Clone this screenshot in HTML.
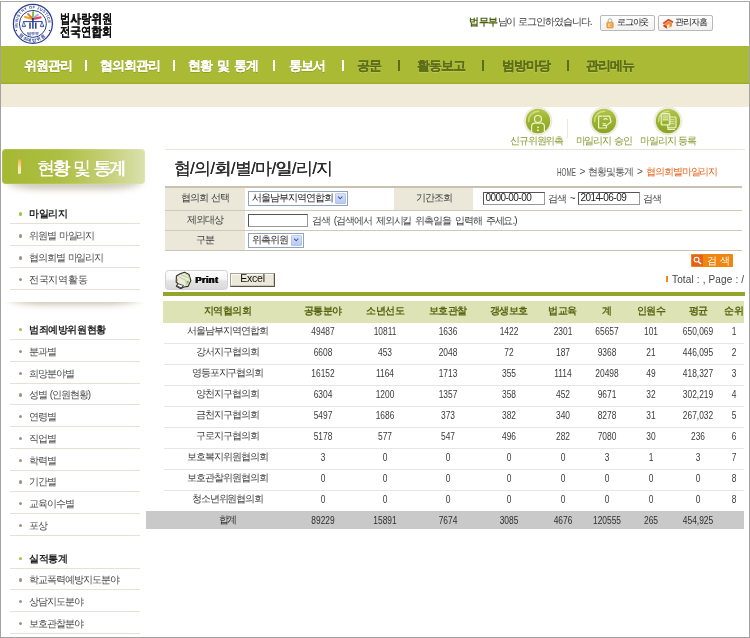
<!DOCTYPE html>
<html lang="ko">
<head>
<meta charset="utf-8">
<title>협의회별마일리지</title>
<style>
html,body{margin:0;padding:0;}
body{width:750px;height:638px;position:relative;overflow:hidden;background:#fff;
 font-family:"Liberation Sans",sans-serif;font-size:9px;color:#444;line-height:1;}
.a{position:absolute;}
.t{position:absolute;white-space:nowrap;}
.c{position:absolute;white-space:nowrap;text-align:center;}
/* frame */
#fl{left:0;top:1px;width:1px;height:637px;background:#a2a2a2;}
#fr{left:749px;top:1px;width:1px;height:637px;background:#a2a2a2;}
#ft{left:0;top:1px;width:750px;height:1px;background:#a8a8a8;}
#fb{left:0;top:637px;width:750px;height:1px;background:#a2a2a2;}
/* header */
.logotxt{left:59.5px;font-size:13px;font-weight:bold;color:#111;letter-spacing:0;transform:scaleX(.8);transform-origin:0 50%;line-height:13px;text-shadow:.6px 0 0 #111;}
.btn{position:absolute;top:15px;height:14px;border:1px solid #b9b9b9;border-radius:2px;background:linear-gradient(#fff,#f1f1f1);box-sizing:content-box;}
.btn span{position:absolute;top:2.3px;font-size:9.2px;color:#1a1a1a;white-space:nowrap;letter-spacing:-1.2px;}
/* nav */
#nav{left:1px;top:46px;width:748px;height:37.5px;background:linear-gradient(#abba35,#abba35 35.5px,#9fae2a 37.5px);}
#band{left:1px;top:83.5px;width:748px;height:23.2px;background:#f0ead9;}
.nv{position:absolute;top:59px;font-size:12.5px;font-weight:bold;white-space:nowrap;letter-spacing:-1.1px;word-spacing:2.6px;line-height:14px;}
.nw{color:#fff;text-shadow:.4px 0 0 #fff,0 1px 0 #8c9c22;}
.nd{color:#5d6c19;text-shadow:.4px 0 0 #5d6c19,0 1px 0 #bccb55;}
.sep{position:absolute;top:60px;width:2px;height:11px;}
.sw{background:#fff;}
.sd{background:#5d6c19;}
/* side */
#stitle{left:2px;top:149px;width:143px;height:35px;border-radius:4px;box-shadow:inset 0 0 0 1px rgba(255,255,255,.12);background:linear-gradient(90deg,#a5b833 0%,#adbf42 40%,#c3cf74 72%,#dbe1ae 100%);}
#sshadow{left:6px;top:180px;width:136px;height:9px;background:rgba(165,155,125,.6);border-radius:0 0 40px 40px/0 0 8px 8px;filter:blur(3.5px);}
#sshadow2w{left:0;top:302px;width:150px;height:14px;overflow:hidden;}
#sshadow2{left:7px;top:-7px;width:135px;height:9px;background:rgba(170,158,125,.7);border-radius:0 0 40px 40px/0 0 8px 8px;filter:blur(3.5px);}
.sl{position:absolute;left:10px;width:130px;height:1px;background:#e6e1d5;}
.si{position:absolute;left:29px;font-size:10px;color:#4a4a4a;white-space:nowrap;letter-spacing:-1.05px;word-spacing:1px;line-height:12px;}
.sh{font-weight:bold;color:#222;letter-spacing:-.4px;}
.bu{position:absolute;left:18.8px;width:3.6px;height:3.6px;margin-top:-.3px;border-radius:2px;background:#a2947c;}
.bg{background:#9dc43a;}
/* icons */
.ic{position:absolute;width:30px;height:30px;}
.il{position:absolute;top:135px;font-size:10px;color:#86962a;white-space:nowrap;line-height:12px;letter-spacing:-1.15px;word-spacing:1.2px;}
/* content */
#cline{left:165px;top:149px;width:580px;height:1px;background:#ebe4d6;}
#ctitle{left:173.5px;top:157px;font-size:16.5px;color:#2a2a2a;letter-spacing:-.6px;text-shadow:.3px 0 0 #2a2a2a;line-height:22px;}
.bc{top:166.4px;font-size:10px;letter-spacing:-1.1px;color:#555;line-height:12px;}
/* form */
.fl{position:absolute;left:165px;width:577px;height:1px;background:#cfc9bb;}
.lab{position:absolute;background:#ece8d9;text-align:center;font-size:10px;letter-spacing:-1px;word-spacing:1px;color:#3c3c3c;white-space:nowrap;}
.inp{position:absolute;box-sizing:border-box;background:#fff;border:1px solid #555;border-right-color:#999;border-bottom-color:#999;font-size:9px;color:#222;white-space:nowrap;overflow:hidden;}
.sel{position:absolute;box-sizing:border-box;background:#fff;border:1px solid #8ea3bd;font-size:10px;letter-spacing:-1.05px;color:#1a1a1a;white-space:nowrap;overflow:hidden;}
.sel b{position:absolute;right:.6px;top:.6px;bottom:.6px;width:11px;background:linear-gradient(#dbe4fb,#b4c6f2);border-radius:2px;box-shadow:inset 0 0 0 .6px #a9bbe6;}
.sel b:after{content:"";position:absolute;left:2.6px;top:2.2px;width:3.4px;height:3.4px;border-right:1.7px solid #2f4a7c;border-bottom:1.7px solid #2f4a7c;transform:rotate(45deg) scale(.85);transform-origin:center;}
.ft{position:absolute;font-size:10px;letter-spacing:-1.05px;word-spacing:2.1px;color:#3c3c3c;white-space:nowrap;line-height:12px;}
/* table */
#gline{left:163px;top:291.7px;width:582px;height:4.5px;background:#93a52b;}
#thead{left:163px;top:301px;width:581px;height:22px;background:#dde3b5;}
.th{position:absolute;top:305.3px;font-size:10px;font-weight:bold;color:#566510;white-space:nowrap;transform:translateX(-50%);line-height:12px;letter-spacing:-.5px;}
.rl{position:absolute;left:164px;width:580px;height:1px;background:#e6e6e6;}
.td{position:absolute;font-size:10px;letter-spacing:-1.05px;color:#3c3c3c;white-space:nowrap;transform:translateX(-50%);line-height:12px;}
.n{font-size:10.5px;letter-spacing:0;color:#3a3a3a;transform:translateX(-50%) scaleX(.8);}
#total{left:146px;top:511px;width:598px;height:18px;background:#c9c9c9;}
</style>
</head>
<body>
<div id="wrap" style="position:absolute;left:0;top:0;width:750px;height:638px;will-change:transform;">
<!-- frame -->
<div class="a" id="ft"></div><div class="a" id="fl"></div><div class="a" id="fr"></div><div class="a" id="fb"></div>

<!-- logo -->
<svg class="a" style="left:12px;top:3px" width="42" height="42" viewBox="0 0 42 42">
 <circle cx="20.9" cy="20.8" r="19.5" fill="#fff" stroke="#2b3d93" stroke-width="1.25"/>
 <circle cx="20.9" cy="20.9" r="13.5" fill="none" stroke="#2b3d93" stroke-width="1"/>
 <path id="lgt" d="M6.36 25.24 A15.2 15.2 0 1 1 35.44 25.24" fill="none"/>
 <text font-family="Liberation Sans, sans-serif" font-size="3.9" font-weight="bold" fill="#2b3d93" letter-spacing=".42"><textPath href="#lgt" startOffset="1">MINISTRY OF JUSTICE</textPath></text>
 <path id="lgb" d="M6.16 31.12 A18 18 0 0 0 35.64 31.12" fill="none"/>
 <text font-family="Liberation Sans, sans-serif" font-size="4.3" font-weight="bold" fill="#2b3d93" letter-spacing="1.0"><textPath href="#lgb" startOffset="1.6">범죄예방위원</textPath></text>
 <circle cx="4.3" cy="27.6" r=".75" fill="#2b3d93"/><circle cx="37.5" cy="27.6" r=".75" fill="#2b3d93"/>
 <path d="M19 15.6 L13.2 14" stroke="#f4a81d" stroke-width="2.3" stroke-linecap="round"/>
 <path d="M19.6 14.6 L16 10.9" stroke="#e9742b" stroke-width="1.9" stroke-linecap="round"/>
 <path d="M20.9 14 L21.1 9" stroke="#79c13c" stroke-width="1.9" stroke-linecap="round"/>
 <path d="M22.2 14.6 L25.9 11.7" stroke="#93b5e6" stroke-width="1.9" stroke-linecap="round"/>
 <path d="M22.8 15.6 L28.6 14.4" stroke="#ea4560" stroke-width="2.1" stroke-linecap="round"/>
 <rect x="19.9" y="15" width="2" height="2.1" fill="#22327c"/>
 <path d="M11.2 18.6 H30.4" stroke="#2b3d93" stroke-width="1"/>
 <path d="M18 19.6 V25.8 M20.9 17 V25.8 M23.8 19.6 V25.8" stroke="#2b3d93" stroke-width="1.5"/>
 <path d="M11.6 18.8 L10.2 23.2 H13.6 Z M30 18.8 L28.4 23.2 H31.8 Z" fill="none" stroke="#2b3d93" stroke-width=".75"/>
 <path d="M10 23.2 Q11.9 24.6 13.8 23.2 M28.2 23.2 Q30.1 24.6 32 23.2" fill="none" stroke="#2b3d93" stroke-width=".7"/>
 <text x="20.9" y="31.6" text-anchor="middle" font-family="Liberation Sans, sans-serif" font-size="4.4" font-weight="bold" fill="#2b3d93" letter-spacing="-.1">법무부</text>
</svg>
<div class="t logotxt" style="top:12px">법사랑위원</div>
<div class="t logotxt" style="top:24.5px">전국연합회</div>

<!-- login -->
<div class="t" style="left:469px;top:16px;font-size:10px;line-height:12px;color:#333;letter-spacing:-1.05px;word-spacing:1px"><b style="color:#4b5f08;letter-spacing:-.5px">법무부</b>님이 로그인하였습니다.</div>
<div class="btn" style="left:600px;width:53px">
 <svg class="a" style="left:5.2px;top:2px" width="8" height="10.5" viewBox="0 0 8 10.5"><path d="M2.2 4.4 V2.6 A1.8 1.8 0 0 1 5.8 2.6 V4.4" fill="none" stroke="#a8a8a8" stroke-width="1"/><rect x=".8" y="4.2" width="6.4" height="5.8" rx=".8" fill="#f4a53a" stroke="#d98a22" stroke-width=".6"/><rect x="2.2" y="5.6" width="3.6" height="3" fill="#fbe0ae"/><rect x="3.6" y="6.4" width="2.2" height="1.4" fill="#ef8f2a"/></svg>
 <span style="left:16px">로그아웃</span></div>
<div class="btn" style="left:658px;width:53px">
 <svg class="a" style="left:2.6px;top:2px" width="12" height="11" viewBox="0 0 12 11"><path d="M.6 5 L6.4 .8 L11.4 3.6 L10.6 5 L6.4 2.8 L2 6.2 Z" fill="#d8452a"/><path d="M2.4 5.8 L6.4 3 L10.2 5 L9.8 8.6 L4.6 10.4 L2 8.6 Z" fill="#ef8a3c"/><path d="M5 7 L7.4 6 L7.4 9.2 L5 10.2 Z" fill="#fbe9cc"/><path d="M1 8 L4.6 10.4 L4.8 8.6 L1.8 6.8 Z" fill="#c8381f"/></svg>
 <span style="left:16.2px">관리자홈</span></div>

<!-- nav -->
<div class="a" id="nav"></div>
<div class="a" id="band"></div>
<div class="nv nw" style="left:24px">위원관리</div><div class="sep sw" style="left:85px"></div>
<div class="nv nw" style="left:100px">협의회관리</div><div class="sep sw" style="left:173px"></div>
<div class="nv nw" style="left:188px">현황 및 통계</div><div class="sep sw" style="left:273px"></div>
<div class="nv nw" style="left:289px">통보서</div><div class="sep sw" style="left:342px"></div>
<div class="nv nd" style="left:357px">공문</div><div class="sep sd" style="left:398px"></div>
<div class="nv nd" style="left:417px">활동보고</div><div class="sep sd" style="left:482px"></div>
<div class="nv nd" style="left:502px">범방마당</div><div class="sep sd" style="left:567px"></div>
<div class="nv nd" style="left:586px">관리메뉴</div>

<!-- quick icons -->
<svg width="0" height="0" style="position:absolute"><defs>
 <linearGradient id="g1" x1="0" y1="0" x2="0" y2="1"><stop offset="0" stop-color="#b3c64a"/><stop offset=".45" stop-color="#9db430"/><stop offset="1" stop-color="#8aa422"/></linearGradient>
 <g id="icbg"><circle cx="15" cy="15" r="14.5" fill="#f3f0e5"/><circle cx="15" cy="15" r="13.6" fill="none" stroke="#e9e4d2" stroke-width=".7"/><circle cx="15" cy="15" r="12.2" fill="url(#g1)"/>
 <path d="M5.6 15.5 A9.6 9.6 0 0 1 15.6 5.3" fill="none" stroke="#dbe6a0" stroke-width="1.5" stroke-linecap="round" opacity=".75"/></g>
</defs></svg>
<svg class="ic" style="left:523px;top:106.4px" viewBox="0 0 30 30"><use href="#icbg"/>
 <circle cx="15" cy="13" r="3.5" fill="#9fb634" stroke="#eef3cf" stroke-width="1.2"/>
 <path d="M8.6 26 V20.6 A3.4 3.4 0 0 1 12 17.2 H18 A3.4 3.4 0 0 1 21.4 20.6 V26" fill="#93ac2a" stroke="#eef3cf" stroke-width="1.2"/>
 <rect x="14.1" y="20.6" width="1.8" height="1.5" fill="#eef3cf"/><rect x="14.1" y="23.6" width="1.8" height="1.5" fill="#eef3cf"/></svg>
<svg class="ic" style="left:589px;top:105.7px" viewBox="0 0 30 30"><use href="#icbg"/>
 <path d="M9.6 10.2 H13 M9.6 10.2 V22 H17.4 V19.8" fill="none" stroke="#eef3cf" stroke-width="1.2"/>
 <path d="M13.4 10.2 H20.6 L22 16 L17.6 19.4 H13.6" fill="none" stroke="#eef3cf" stroke-width="1.2" stroke-linejoin="round"/>
 <path d="M14.6 13.6 Q16.6 11.6 18.6 13.6 M13.6 17 Q15 18.6 16.8 17.4" fill="none" stroke="#eef3cf" stroke-width="1.1"/></svg>
<svg class="ic" style="left:653.4px;top:105.7px" viewBox="0 0 30 30"><use href="#icbg"/>
 <rect x="14.6" y="11" width="8.4" height="10.8" rx="1" fill="#a9be45" stroke="#eef3cf" stroke-width="1.1"/>
 <path d="M16.4 13.6 H21.4 M16.4 15.6 H21.4 M16.4 17.6 H21.4" stroke="#dfe8b0" stroke-width=".8"/>
 <rect x="8.2" y="7.6" width="8.6" height="11.4" rx="1" fill="#b4c758" stroke="#eef3cf" stroke-width="1.1"/>
 <path d="M9.8 10 H15.2 M9.8 11.8 H15.2 M9.8 13.6 H15.2" stroke="#e8efc4" stroke-width=".8"/><rect x="9.6" y="15.4" width="5.8" height="2.2" fill="#8fa826"/>
 <path d="M15 21.6 V23.4 H22" fill="none" stroke="#eef3cf" stroke-width="1.1"/></svg>
<div class="a" style="left:567px;top:119px;width:1px;height:19px;background:#ece7da"></div>
<div class="il" style="left:510px">신규위원위촉</div>
<div class="il" style="left:575.5px">마일리지 승인</div>
<div class="il" style="left:640px">마일리지 등록</div>

<!-- side title -->
<div class="a" id="sshadow"></div>
<div class="a" id="stitle"></div>
<div class="a" style="left:18px;top:159px;width:3px;height:15px;border-radius:2px;background:linear-gradient(#f7a944,#fbe9b0 60%,#f6f1c8)"></div>
<div class="t" style="left:37px;top:157px;font-size:17.5px;color:#fff;line-height:22px;letter-spacing:-2.85px;word-spacing:3.4px;text-shadow:.4px 0 0 #fff,0 0 1px #a3b442">현황 및 통계</div>

<!-- side menu group 1 -->
<div class="bu bg" style="top:212.5px"></div><div class="si sh" style="top:208px">마일리지</div><div class="sl" style="top:223px"></div>
<div class="bu" style="top:234.5px"></div><div class="si" style="top:230px">위원별 마일리지</div><div class="sl" style="top:245px"></div>
<div class="bu" style="top:256.5px"></div><div class="si" style="top:252px">협의회별 마일리지</div><div class="sl" style="top:267px"></div>
<div class="bu" style="top:278px"></div><div class="si" style="top:273.5px;letter-spacing:-.3px">전국지역활동</div><div class="sl" style="top:289px"></div>
<div class="a" id="sshadow2w"><div class="a" id="sshadow2"></div></div>
<!-- group 2 -->
<div class="bu bg" style="top:328px"></div><div class="si sh" style="top:323.5px">범죄예방위원현황</div><div class="sl" style="top:339px"></div>
<div class="bu" style="top:350px"></div><div class="si" style="top:345.5px">분과별</div><div class="sl" style="top:361px"></div>
<div class="bu" style="top:372px"></div><div class="si" style="top:367.5px">희망분야별</div><div class="sl" style="top:383px"></div>
<div class="bu" style="top:393.5px"></div><div class="si" style="top:389px">성별 (인원현황)</div><div class="sl" style="top:404px"></div>
<div class="bu" style="top:415px"></div><div class="si" style="top:410.5px">연령별</div><div class="sl" style="top:426px"></div>
<div class="bu" style="top:437px"></div><div class="si" style="top:432.5px">직업별</div><div class="sl" style="top:448px"></div>
<div class="bu" style="top:459px"></div><div class="si" style="top:454.5px">학력별</div><div class="sl" style="top:470px"></div>
<div class="bu" style="top:480.5px"></div><div class="si" style="top:476px">기간별</div><div class="sl" style="top:491px"></div>
<div class="bu" style="top:502px"></div><div class="si" style="top:497.5px">교육이수별</div><div class="sl" style="top:513px"></div>
<div class="bu" style="top:524px"></div><div class="si" style="top:519.5px">포상</div><div class="sl" style="top:535px"></div>
<!-- group 3 -->
<div class="bu bg" style="top:557px"></div><div class="si sh" style="top:552.5px">실적통계</div><div class="sl" style="top:568px"></div>
<div class="bu" style="top:578.5px"></div><div class="si" style="top:574px">학교폭력예방지도분야</div><div class="sl" style="top:589px"></div>
<div class="bu" style="top:600px"></div><div class="si" style="top:595.5px">상담지도분야</div><div class="sl" style="top:611px"></div>
<div class="bu" style="top:622px"></div><div class="si" style="top:617.5px">보호관찰분야</div><div class="sl" style="top:633px"></div>

<!-- content head -->
<div class="a" id="cline"></div>
<div class="t" id="ctitle">협/의/회/별/마/일/리/지</div>
<div class="t bc" style="left:557px;font-size:10.5px;letter-spacing:0;transform:scaleX(.6);transform-origin:0 50%">HOME</div><div class="t bc" style="left:579.5px">&gt;</div><div class="t bc" style="left:588px">현황및통계</div><div class="t bc" style="left:637px">&gt;</div>
<div class="t bc" style="left:646px;color:#e8621a">협의회별마일리지</div>

<!-- form -->
<div class="a" style="left:165px;top:186px;width:577px;height:2px;background:#cbc1b0"></div>
<div class="lab" style="left:165px;top:188px;width:80px;height:22px;line-height:20px">협의회 선택</div>
<div class="lab" style="left:394px;top:188px;width:79px;height:22px;line-height:20px">기간조회</div>
<div class="fl" style="top:209.7px"></div>
<div class="lab" style="left:165px;top:210.7px;width:80px;height:19.8px;line-height:18.6px">제외대상</div>
<div class="fl" style="top:230.3px"></div>
<div class="lab" style="left:165px;top:231.3px;width:80px;height:19px;line-height:17.4px">구분</div>
<div class="fl" style="top:250.2px;background:#c9c3b6"></div>

<div class="sel" style="left:248px;top:191px;width:100px;height:15px;line-height:12px;padding-left:3px">서울남부지역연합회<b></b></div>
<div class="inp" style="left:248px;top:214px;width:60px;height:13px"></div>
<div class="ft" style="left:312px;top:214.5px">검색 (검색에서 제외시킬 위촉일을 입력해 주세요.)</div>
<div class="sel" style="left:248px;top:233px;width:56px;height:14.5px;line-height:11.5px;padding-left:3px">위촉위원<b></b></div>
<div class="inp" style="left:483px;top:192px;width:62px;height:13px;line-height:10.5px;padding-left:1.5px;font-size:10px;letter-spacing:-.55px">0000-00-00</div>
<div class="ft" style="left:548px;top:192.8px">검색 ~</div>
<div class="inp" style="left:578px;top:192px;width:62px;height:13px;line-height:10.5px;padding-left:1.5px;font-size:10px;letter-spacing:-.55px">2014-06-09</div>
<div class="ft" style="left:643px;top:192.8px">검색</div>

<!-- search btn -->
<div class="a" style="left:691px;top:254px;width:42px;height:13px;background:#f0850f;border-radius:1px"></div>
<div class="a" style="left:692px;top:255px;width:11px;height:11px;background:#e2641a"></div>
<svg class="a" style="left:693px;top:256px" width="9" height="9" viewBox="0 0 9 9"><circle cx="3.6" cy="3.6" r="2.4" fill="none" stroke="#fff" stroke-width="1.1"/><path d="M5.4 5.4 L8 8" stroke="#fff" stroke-width="1.4"/></svg>
<div class="t" style="left:707px;top:255px;font-size:9.5px;line-height:11px;color:#fff;letter-spacing:2.6px">검색</div>

<!-- print / excel -->
<div class="a" style="left:165px;top:270px;width:61px;height:17.5px;border:1px solid #d2d2d2;border-radius:3.5px;background:linear-gradient(#fdfdfd 0%,#f6f6f6 45%,#e4e4e4 55%,#dadada 100%);box-sizing:content-box"></div>
<svg class="a" style="left:173px;top:271px" width="20" height="18" viewBox="0 0 20 18">
 <path d="M11.4 1.2 L16 3.4 L17.9 9.6 L15 15.4 L11 16 L7.6 17.6 L3.4 15.2 L5 12.6 L3.2 11 L3.4 5 L7.2 2.8 Z" fill="#e9edda" stroke="#2e2e2e" stroke-width="1.1" stroke-linejoin="round"/>
 <path d="M7.4 3.4 L14.6 6.6 M5.4 5.6 L13 9.4 L13.4 14.6" fill="none" stroke="#b9c29a" stroke-width=".9"/>
 <path d="M12 2.4 L15.4 4.2 L16.6 8.4" fill="none" stroke="#a9c06a" stroke-width="1"/>
 <path d="M5.4 12.8 L10.6 14.6 L8 16.8 L3.8 14.8 Z" fill="#fbfbf2" stroke="#2e2e2e" stroke-width=".8" stroke-linejoin="round"/>
 <path d="M13.6 10.6 L15.8 9.4 L15 13.4 Z" fill="#8aa63a"/>
 <path d="M4.2 7.6 L4.4 10.2" stroke="#e07a5a" stroke-width=".8"/>
</svg>
<div class="t" style="left:195.3px;top:274.3px;font-size:9.5px;font-weight:bold;color:#111;line-height:12px;letter-spacing:.3px;text-shadow:.5px 0 0 #111,-.25px 0 0 #111,0 .3px 0 #111">Print</div>
<div class="a" style="left:230px;top:272.8px;width:45.3px;height:14.2px;box-sizing:border-box;background:#ece9d8;border:1px solid #a5a398;border-right-color:#55534c;border-bottom-color:#55534c;box-shadow:inset -1px -1px 0 #cfccbc,inset 1px 1px 0 #fbfaf4"></div>
<div class="c" style="left:230px;top:273px;width:45px;font-size:10.5px;color:#111;line-height:11px;letter-spacing:-.2px">Excel</div>
<div class="a" style="left:666px;top:276px;width:2px;height:6px;background:#f08a18"></div>
<div class="t" style="left:672px;top:273.5px;font-size:10px;line-height:12px;color:#444;letter-spacing:.15px">Total : , Page : /</div>

<!-- table -->
<div class="a" id="gline"></div>
<div class="a" id="thead"></div>
<div class="th" style="left:227.5px">지역협의회</div>
<div class="th" style="left:322.5px">공통분야</div>
<div class="th" style="left:385px">소년선도</div>
<div class="th" style="left:447.5px">보호관찰</div>
<div class="th" style="left:508.5px">갱생보호</div>
<div class="th" style="left:562.5px">법교육</div>
<div class="th" style="left:607px">계</div>
<div class="th" style="left:651px">인원수</div>
<div class="th" style="left:698px">평균</div>
<div class="th" style="left:733.5px">순위</div>
<div class="a" id="total"></div>
<!--ROWS-->
<div class="td" style="left:227.5px;top:325px">서울남부지역연합회</div>
<div class="td n" style="left:322.5px;top:325px">49487</div>
<div class="td n" style="left:385px;top:325px">10811</div>
<div class="td n" style="left:447.5px;top:325px">1636</div>
<div class="td n" style="left:508.5px;top:325px">1422</div>
<div class="td n" style="left:562.5px;top:325px">2301</div>
<div class="td n" style="left:607px;top:325px">65657</div>
<div class="td n" style="left:651px;top:325px">101</div>
<div class="td n" style="left:698px;top:325px">650,069</div>
<div class="td n" style="left:733.5px;top:325px">1</div>
<div class="rl" style="top:343px"></div>
<div class="td" style="left:227.5px;top:346px">강서지구협의회</div>
<div class="td n" style="left:322.5px;top:346px">6608</div>
<div class="td n" style="left:385px;top:346px">453</div>
<div class="td n" style="left:447.5px;top:346px">2048</div>
<div class="td n" style="left:508.5px;top:346px">72</div>
<div class="td n" style="left:562.5px;top:346px">187</div>
<div class="td n" style="left:607px;top:346px">9368</div>
<div class="td n" style="left:651px;top:346px">21</div>
<div class="td n" style="left:698px;top:346px">446,095</div>
<div class="td n" style="left:733.5px;top:346px">2</div>
<div class="rl" style="top:364px"></div>
<div class="td" style="left:227.5px;top:367px">영등포지구협의회</div>
<div class="td n" style="left:322.5px;top:367px">16152</div>
<div class="td n" style="left:385px;top:367px">1164</div>
<div class="td n" style="left:447.5px;top:367px">1713</div>
<div class="td n" style="left:508.5px;top:367px">355</div>
<div class="td n" style="left:562.5px;top:367px">1114</div>
<div class="td n" style="left:607px;top:367px">20498</div>
<div class="td n" style="left:651px;top:367px">49</div>
<div class="td n" style="left:698px;top:367px">418,327</div>
<div class="td n" style="left:733.5px;top:367px">3</div>
<div class="rl" style="top:385px"></div>
<div class="td" style="left:227.5px;top:388px">양천지구협의회</div>
<div class="td n" style="left:322.5px;top:388px">6304</div>
<div class="td n" style="left:385px;top:388px">1200</div>
<div class="td n" style="left:447.5px;top:388px">1357</div>
<div class="td n" style="left:508.5px;top:388px">358</div>
<div class="td n" style="left:562.5px;top:388px">452</div>
<div class="td n" style="left:607px;top:388px">9671</div>
<div class="td n" style="left:651px;top:388px">32</div>
<div class="td n" style="left:698px;top:388px">302,219</div>
<div class="td n" style="left:733.5px;top:388px">4</div>
<div class="rl" style="top:406px"></div>
<div class="td" style="left:227.5px;top:409px">금천지구협의회</div>
<div class="td n" style="left:322.5px;top:409px">5497</div>
<div class="td n" style="left:385px;top:409px">1686</div>
<div class="td n" style="left:447.5px;top:409px">373</div>
<div class="td n" style="left:508.5px;top:409px">382</div>
<div class="td n" style="left:562.5px;top:409px">340</div>
<div class="td n" style="left:607px;top:409px">8278</div>
<div class="td n" style="left:651px;top:409px">31</div>
<div class="td n" style="left:698px;top:409px">267,032</div>
<div class="td n" style="left:733.5px;top:409px">5</div>
<div class="rl" style="top:427px"></div>
<div class="td" style="left:227.5px;top:430px">구로지구협의회</div>
<div class="td n" style="left:322.5px;top:430px">5178</div>
<div class="td n" style="left:385px;top:430px">577</div>
<div class="td n" style="left:447.5px;top:430px">547</div>
<div class="td n" style="left:508.5px;top:430px">496</div>
<div class="td n" style="left:562.5px;top:430px">282</div>
<div class="td n" style="left:607px;top:430px">7080</div>
<div class="td n" style="left:651px;top:430px">30</div>
<div class="td n" style="left:698px;top:430px">236</div>
<div class="td n" style="left:733.5px;top:430px">6</div>
<div class="rl" style="top:448px"></div>
<div class="td" style="left:227.5px;top:451px">보호복지위원협의회</div>
<div class="td n" style="left:322.5px;top:451px">3</div>
<div class="td n" style="left:385px;top:451px">0</div>
<div class="td n" style="left:447.5px;top:451px">0</div>
<div class="td n" style="left:508.5px;top:451px">0</div>
<div class="td n" style="left:562.5px;top:451px">0</div>
<div class="td n" style="left:607px;top:451px">3</div>
<div class="td n" style="left:651px;top:451px">1</div>
<div class="td n" style="left:698px;top:451px">3</div>
<div class="td n" style="left:733.5px;top:451px">7</div>
<div class="rl" style="top:469px"></div>
<div class="td" style="left:227.5px;top:472px">보호관찰위원협의회</div>
<div class="td n" style="left:322.5px;top:472px">0</div>
<div class="td n" style="left:385px;top:472px">0</div>
<div class="td n" style="left:447.5px;top:472px">0</div>
<div class="td n" style="left:508.5px;top:472px">0</div>
<div class="td n" style="left:562.5px;top:472px">0</div>
<div class="td n" style="left:607px;top:472px">0</div>
<div class="td n" style="left:651px;top:472px">0</div>
<div class="td n" style="left:698px;top:472px">0</div>
<div class="td n" style="left:733.5px;top:472px">8</div>
<div class="rl" style="top:490px"></div>
<div class="td" style="left:227.5px;top:493px">청소년위원협의회</div>
<div class="td n" style="left:322.5px;top:493px">0</div>
<div class="td n" style="left:385px;top:493px">0</div>
<div class="td n" style="left:447.5px;top:493px">0</div>
<div class="td n" style="left:508.5px;top:493px">0</div>
<div class="td n" style="left:562.5px;top:493px">0</div>
<div class="td n" style="left:607px;top:493px">0</div>
<div class="td n" style="left:651px;top:493px">0</div>
<div class="td n" style="left:698px;top:493px">0</div>
<div class="td n" style="left:733.5px;top:493px">8</div>
<div class="td" style="left:227.5px;top:514px;color:#2e2e2e">합계</div>
<div class="td n" style="left:322.5px;top:514px;color:#2e2e2e">89229</div>
<div class="td n" style="left:385px;top:514px;color:#2e2e2e">15891</div>
<div class="td n" style="left:447.5px;top:514px;color:#2e2e2e">7674</div>
<div class="td n" style="left:508.5px;top:514px;color:#2e2e2e">3085</div>
<div class="td n" style="left:562.5px;top:514px;color:#2e2e2e">4676</div>
<div class="td n" style="left:607px;top:514px;color:#2e2e2e">120555</div>
<div class="td n" style="left:651px;top:514px;color:#2e2e2e">265</div>
<div class="td n" style="left:698px;top:514px;color:#2e2e2e">454,925</div>
<!--/ROWS-->
</div>
</body>
</html>
